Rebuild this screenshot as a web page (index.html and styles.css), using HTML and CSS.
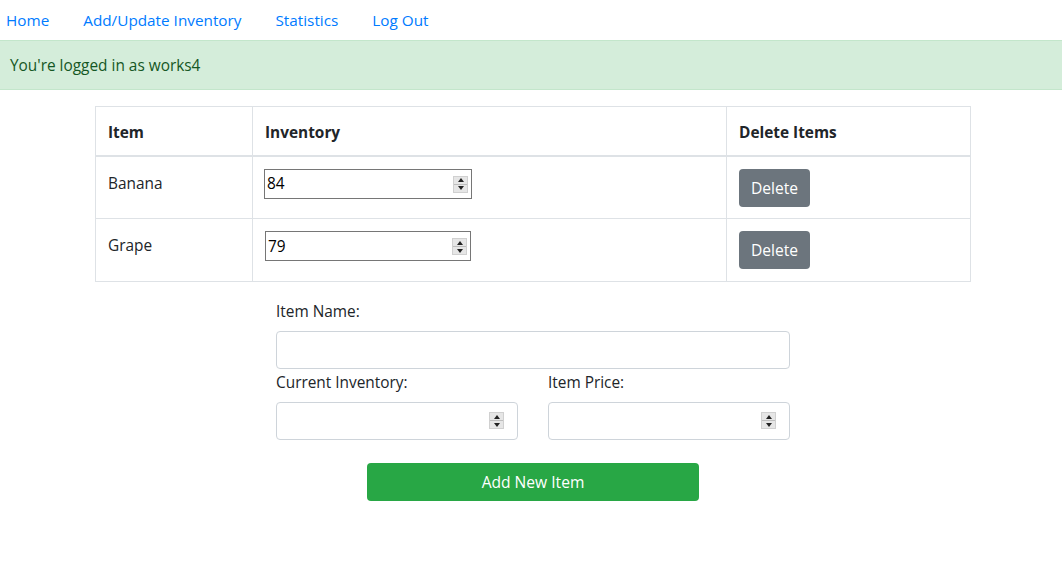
FILE: index.html
```html
<!DOCTYPE html>
<html>
<head>
<meta charset="utf-8">
<link rel="stylesheet" href="styles.css">
</head>
<body>
<nav class="nav">
  <a href="#">Home</a>
  <a href="#">Add/Update Inventory</a>
  <a href="#">Statistics</a>
  <a href="#">Log Out</a>
</nav>
<div class="alert">You're logged in as works4</div>
<table class="tbl">
  <thead>
    <tr><th class="c1">Item</th><th class="c2">Inventory</th><th class="c3">Delete Items</th></tr>
  </thead>
  <tbody>
    <tr>
      <td>Banana</td>
      <td><div class="num w1"><input type="text" value="84"><span class="spin"><i class="up"></i><i class="down"></i></span></div></td>
      <td><button class="btn-del">Delete</button></td>
    </tr>
    <tr>
      <td>Grape</td>
      <td><div class="num w2"><input type="text" value="79"><span class="spin"><i class="up"></i><i class="down"></i></span></div></td>
      <td><button class="btn-del">Delete</button></td>
    </tr>
  </tbody>
</table>
<form class="form">
  <label class="lbl">Item Name:</label>
  <input class="ctl" type="text">
  <div class="row">
    <div class="col">
      <label class="lbl">Current Inventory:</label>
      <div class="ctl fake"><span class="spin"><i class="up"></i><i class="down"></i></span></div>
    </div>
    <div class="col">
      <label class="lbl">Item Price:</label>
      <div class="ctl fake"><span class="spin"><i class="up"></i><i class="down"></i></span></div>
    </div>
  </div>
  <div class="actions"><button type="button" class="btn-add">Add New Item</button></div>
</form>
</body>
</html>
```
FILE: styles.css
```css
* { box-sizing: border-box; }
body {
  margin: 0;
  font-family: "Open Sans", "Noto Sans", sans-serif;
  font-size: 15.4px;
  color: #212529;
  background: #fff;
}
.nav {
  display: flex;
  gap: 34px;
  padding: 0 0 0 6px;
  height: 40px;
  align-items: center;
}
.nav a {
  color: #007bff;
  text-decoration: none;
  font-size: 15.3px;
}
.alert {
  background: #d4edda;
  border-top: 1px solid #c3e6cb;
  border-bottom: 1px solid #c3e6cb;
  color: #155724;
  height: 50px;
  padding: 1px 10px 0;
  display: flex;
  align-items: center;
}
.tbl {
  margin: 16px 0 0 95px;
  width: 876px;
  border-collapse: collapse;
}
.tbl th, .tbl td {
  border: 1px solid #dee2e6;
  padding: 16px 12px 8px;
  text-align: left;
  vertical-align: top;
}
.tbl th {
  font-weight: 700;
  height: 49px;
  padding-top: 14px;
  padding-bottom: 10px;
  vertical-align: middle;
  border-bottom: 2px solid #dee2e6;
}
.c1 { width: 157px; }
.c2 { width: 474px; }
.tbl td { height: 63px; }
.num {
  position: relative;
  height: 30px;
  margin-top: -4px;
  border: 1px solid #767676;
  background: #fff;
}
.w1 { width: 208px; margin-left: -1px; }
.w2 { width: 206px; margin-left: 0; }
.num input {
  border: 0;
  outline: 0;
  width: 100%;
  height: 28px;
  padding: 0 2px;
  font-family: inherit;
  font-size: 15.4px;
  color: #000;
  background: transparent;
}
.spin {
  position: absolute;
  right: 3px;
  top: 50%;
  margin-top: -8px;
  width: 15px;
  height: 17px;
  background: #e6e6e6;
  border: 1px solid #d0d0d0;
  display: flex;
  flex-direction: column;
}
.spin i {
  flex: 1;
  display: flex;
  align-items: center;
  justify-content: center;
}
.spin .up { border-bottom: 1px solid #bdbdbd; }
.spin .up::before {
  content: "";
  border-left: 3px solid transparent;
  border-right: 3px solid transparent;
  border-bottom: 4px solid #222;
}
.spin .down::before {
  content: "";
  border-left: 3px solid transparent;
  border-right: 3px solid transparent;
  border-top: 4px solid #222;
}
.btn-del {
  background: #6c757d;
  color: #fff;
  border: 0;
  border-radius: 4px;
  height: 38px;
  width: 71px;
  font-family: inherit;
  font-size: 15.6px;
  margin-top: -4px;
}
.form {
  width: 514px;
  margin: 18px 0 0 276px;
}
.lbl {
  display: block;
  height: 24px;
  line-height: 24px;
  margin-bottom: 7px;
}
.ctl {
  display: block;
  width: 100%;
  height: 38px;
  border: 1px solid #ced4da;
  border-radius: 4px;
  background: #fff;
  position: relative;
}
.row {
  display: flex;
  gap: 30px;
  margin-top: 2px;
}
.col { flex: 1; }
.col .lbl { margin-bottom: 7px; }
.fake .spin { right: 13px; margin-top: -9px; }
.actions {
  display: flex;
  justify-content: center;
  margin-top: 23px;
  padding-left: 0;
}
.btn-add {
  width: 332px;
  height: 38px;
  background: #28a745;
  color: #fff;
  border: 0;
  border-radius: 4px;
  font-family: inherit;
  font-size: 15.6px;
}
```
